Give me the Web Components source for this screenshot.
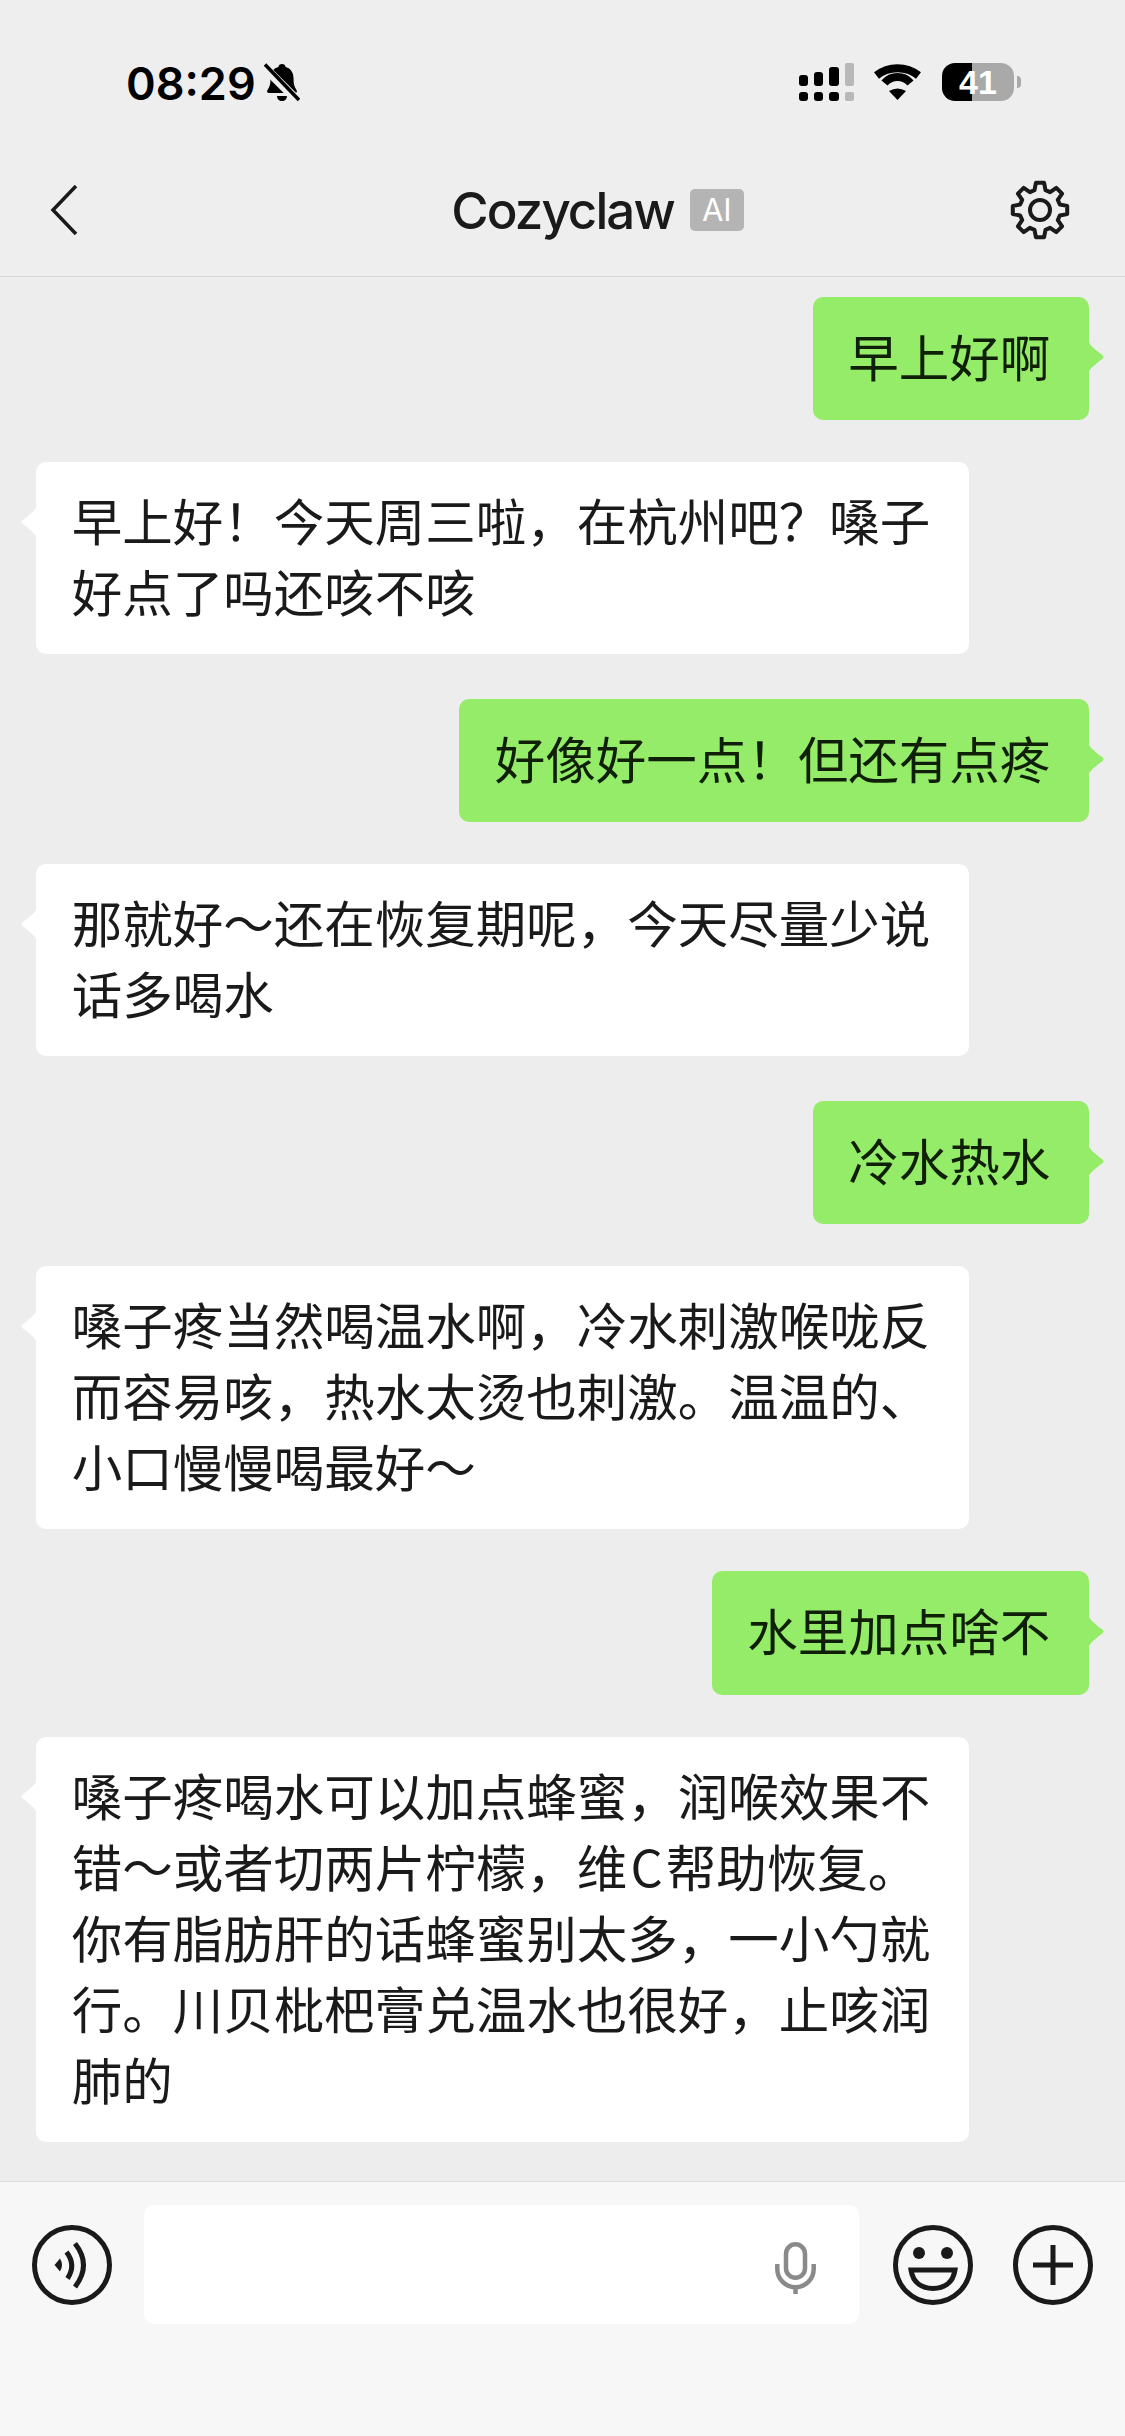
<!DOCTYPE html>
<html lang="zh-CN">
<head>
<meta charset="utf-8">
<title>Cozyclaw</title>
<style>
  html, body { margin: 0; padding: 0; }
  body {
    width: 1125px;
    height: 2436px;
    overflow: hidden;
    display: flex;
    flex-direction: column;
    background: #ededed;
    font-family: "Noto Sans CJK SC", "Noto Sans", sans-serif;
    color: #1a1a1a;
  }
  chat-list { flex: 1; }
</style>
</head>
<body>
  <status-bar></status-bar>
  <nav-bar title-text="Cozyclaw"></nav-bar>
  <chat-list>
    <chat-msg side="me">早上好啊</chat-msg>
    <chat-msg side="bot">早上好！今天周三啦，在杭州吧？嗓子好点了吗还咳不咳</chat-msg>
    <chat-msg side="me" spaced>好像好一点！但还有点疼</chat-msg>
    <chat-msg side="bot">那就好～还在恢复期呢，今天尽量少说话多喝水</chat-msg>
    <chat-msg side="me" spaced>冷水热水</chat-msg>
    <chat-msg side="bot">嗓子疼当然喝温水啊，冷水刺激喉咙反而容易咳，热水太烫也刺激。温温的、小口慢慢喝最好～</chat-msg>
    <chat-msg side="me">水里加点啥不</chat-msg>
    <chat-msg side="bot">嗓子疼喝水可以加点蜂蜜，润喉效果不错～或者切两片柠檬，维&#8202;C&#8202;帮助恢复。你有脂肪肝的话蜂蜜别太多，一小勺就行。川贝枇杷膏兑温水也很好，止咳润肺的</chat-msg>
  </chat-list>
  <input-bar></input-bar>

<script>
const statusTemplate = document.createElement('template');
statusTemplate.innerHTML = `
  <style>
    :host {
      display: flex;
      justify-content: space-between;
      align-items: center;
      height: 164px;
      padding: 0 104px 0 126px;
      box-sizing: border-box;
      background: #eeeeee;
      color: #000;
    }
    .left, .right { display: flex; align-items: center; }
    .time {
      font: 600 45px/1 Inter, "Liberation Sans", sans-serif;
      margin: 2px 8px 0 0;
    }
    .bell { margin-top: 2px; }
    .signal { margin-right: 19px; }
    .wifi { margin-right: 20px; }
    .battery {
      width: 72px;
      height: 38px;
      border-radius: 13px;
      background: linear-gradient(90deg, #000 30px, #a9a9a9 30px);
      color: #fff;
      font: 700 34px/38px "Liberation Sans", sans-serif;
      text-align: center;
      margin-right: 3px;
      overflow: hidden;
    }
    .cap { width: 4px; height: 12px; background: #a9a9a9; border-radius: 0 4px 4px 0; }
  </style>
  <div class="left">
    <span class="time">08:29</span>
    <svg class="bell" width="36" height="40" viewBox="0 0 36 40">
      <path d="M18 1c2 0 3.400 1.300 3.600 3C27 5.400 29.500 10 29.500 15c0 6 1 9 3 12 1 1.600.3 3-1.600 3H5.100c-1.900 0-2.600-1.400-1.600-3 2-3 3-6 3-12 0-5 2.500-9.600 7.900-11C14.600 2.300 16 1 18 1z" fill="#000"/>
      <path d="M13 33h10c0 3-2.200 5-5 5s-5-2-5-5z" fill="#000"/>
      <path d="M-1 3 L33 37" stroke="#eeeeee" stroke-width="9"/>
      <path d="M1 1.500 L35 37" stroke="#000" stroke-width="3.500"/>
    </svg>
  </div>
  <div class="right">
    <svg class="signal" width="55" height="38" viewBox="0 0 55 38">
      <rect x="0" y="12" width="9" height="11" rx="3" fill="#000"/>
      <rect x="15" y="9" width="9" height="14" rx="3" fill="#000"/>
      <rect x="30" y="4" width="10" height="19" rx="3" fill="#000"/>
      <rect x="46" y="0" width="9" height="23" rx="2" fill="#b8b8b8"/>
      <rect x="0" y="29" width="9" height="9" rx="3" fill="#000"/>
      <rect x="15" y="29" width="9" height="9" rx="3" fill="#000"/>
      <rect x="30" y="29" width="10" height="9" rx="3" fill="#000"/>
      <rect x="46" y="29" width="9" height="9" rx="2" fill="#b8b8b8"/>
    </svg>
    <svg class="wifi" width="49" height="36" viewBox="0 0 49 36">
      <path d="M3.500 11.500 A34 34 0 0 1 45.500 11.500" fill="none" stroke="#000" stroke-width="8"/>
      <path d="M11.500 19 A17 17 0 0 1 37.500 19" fill="none" stroke="#000" stroke-width="8"/>
      <path d="M16 27 Q24.500 22 33 27 L24.500 36 Z" fill="#000"/>
    </svg>
    <div class="battery">41</div>
    <div class="cap"></div>
  </div>
`;

class StatusBar extends HTMLElement {
  connectedCallback() {
    const shadowRoot = this.attachShadow({ mode: 'open' });
    shadowRoot.appendChild(statusTemplate.content.cloneNode(true));
  }
}

// 8 teeth, stroked with round joins so the corners soften
function gearPath(cx, cy, outer, root) {
  let d = '';
  for (let i = 0; i < 8; i++) {
    const a = (i * Math.PI) / 4 - Math.PI / 2;
    const pts = [[root, -0.27], [outer, -0.15], [outer, 0.15], [root, 0.27]];
    pts.forEach(([r, off], j) => {
      const x = (cx + r * Math.cos(a + off)).toFixed(1);
      const y = (cy + r * Math.sin(a + off)).toFixed(1);
      d += (i === 0 && j === 0 ? 'M' : 'L') + x + ' ' + y + ' ';
    });
  }
  return d + 'Z';
}

const navTemplate = document.createElement('template');
navTemplate.innerHTML = `
  <style>
    :host {
      display: grid;
      grid-template-columns: 1fr auto 1fr;
      align-items: center;
      height: 113px;
      padding-bottom: 20px;
      box-sizing: border-box;
      border-bottom: 1px solid #d6d6d6;
      background: #eeeeee;
    }
    .left { padding-left: 50px; display: flex; }
    .title { font: 500 51px/1 Inter, "Liberation Sans", sans-serif; letter-spacing: -1.9px; color: #1a1a1a; }
    .right { display: flex; align-items: center; padding-right: 54px; }
    .badge {
      width: 54px;
      height: 42px;
      margin-left: 16px;
      border-radius: 5px;
      background: #b4b4b4;
      color: #fff;
      font: 400 31px/42px Inter, "Liberation Sans", sans-serif;
      text-align: center;
    }
    .gear { margin-left: auto; }
  </style>
  <div class="left">
    <svg width="28" height="52" viewBox="0 0 28 52">
      <path d="M26 2 L3 26 L26 50" fill="none" stroke="#1a1a1a" stroke-width="3.500"/>
    </svg>
  </div>
  <div class="title"></div>
  <div class="right">
    <div class="badge">AI</div>
    <svg class="gear" width="62" height="62" viewBox="0 0 62 62">
      <path d="${gearPath(31, 31, 27.5, 20.5)}" fill="none" stroke="#1a1a1a" stroke-width="4" stroke-linejoin="round"/>
      <circle cx="31" cy="31" r="10" fill="none" stroke="#1a1a1a" stroke-width="4"/>
    </svg>
  </div>
`;

class NavBar extends HTMLElement {
  connectedCallback() {
    const shadowRoot = this.attachShadow({ mode: 'open' });
    shadowRoot.appendChild(navTemplate.content.cloneNode(true));
    shadowRoot.querySelector('.title').textContent = this.getAttribute('title-text');
  }
}

const listTemplate = document.createElement('template');
listTemplate.innerHTML = `
  <style>
    :host {
      display: flex;
      flex-direction: column;
      gap: 42px;
      padding: 20px 36px 0;
      box-sizing: border-box;
      background: #ededed;
    }
  </style>
  <slot></slot>
`;

class ChatList extends HTMLElement {
  connectedCallback() {
    const shadowRoot = this.attachShadow({ mode: 'open' });
    shadowRoot.appendChild(listTemplate.content.cloneNode(true));
  }
}

const msgTemplate = document.createElement('template');
msgTemplate.innerHTML = `
  <style>
    :host { display: flex; justify-content: flex-start; }
    :host([side="me"]) { justify-content: flex-end; }
    :host([spaced]) { margin-top: 3px; }
    .bubble {
      position: relative;
      max-width: 933px;
      box-sizing: border-box;
      padding: 22px 38.75px 28px 35.75px;
      border-radius: 10px;
      background: #fff;
      font-size: 50.5px;
      line-height: 71.05px;
      color: #1a1a1a;
    }
    :host([side="me"]) .bubble { background: #95ec69; padding: 23px 38.75px 29px 35.75px; color: #0f1f08; }
    .bubble::after {
      content: "";
      position: absolute;
      top: 44px;
      left: -15px;
      width: 16px;
      height: 32px;
      background: #fff;
      clip-path: path("M16 0 C14 4 10 8 1 14.500 Q0 16 1 17.500 C10 24 14 28 16 32 Z");
    }
    :host([side="me"]) .bubble::after {
      left: auto;
      right: -15px;
      background: #95ec69;
      clip-path: path("M0 0 C2 4 6 8 15 14.500 Q16 16 15 17.500 C6 24 2 28 0 32 Z");
    }
  </style>
  <div class="bubble"><slot></slot></div>
`;

class ChatMsg extends HTMLElement {
  connectedCallback() {
    const shadowRoot = this.attachShadow({ mode: 'open' });
    shadowRoot.appendChild(msgTemplate.content.cloneNode(true));
  }
}

const inputTemplate = document.createElement('template');
inputTemplate.innerHTML = `
  <style>
    :host {
      display: flex;
      align-items: flex-start;
      height: 255px;
      padding: 23px 32px 0;
      box-sizing: border-box;
      border-top: 1px solid #d9d9d9;
      background: #f7f7f7;
    }
    .icon { flex: none; margin-top: 20px; }
    .field {
      flex: 1;
      height: 119px;
      margin: 0 34px 0 32px;
      padding-right: 43px;
      box-sizing: border-box;
      border-radius: 10px;
      background: #fff;
      display: flex;
      align-items: center;
      justify-content: flex-end;
    }
    .mic { margin-top: 7px; }
    .plus { margin-left: 40px; }
  </style>
  <svg class="icon" width="80" height="80" viewBox="0 0 80 80" fill="none" stroke="#1a1a1a">
    <circle cx="40" cy="40" r="37.500" stroke-width="5"/>
    <path d="M22.500 40 L28 33.500 Q32 40 28 46.500 Z" fill="#1a1a1a" stroke="none"/>
    <path d="M34.500 27 Q44.500 40 35.500 53.500" stroke-width="5"/>
    <path d="M43 18.500 Q60 40 43 62" stroke-width="5"/>
  </svg>
  <div class="field">
    <svg class="mic" width="41" height="52" viewBox="0 0 41 52" fill="none" stroke="#8a8a8a" stroke-width="4.500">
      <rect x="11" y="2.300" width="19" height="33.500" rx="9.500"/>
      <path d="M2.300 22 v5 a18.200 18.200 0 0 0 36.400 0 v-5"/>
      <path d="M20.500 44 V52"/>
    </svg>
  </div>
  <svg class="icon" width="80" height="80" viewBox="0 0 80 80" fill="none" stroke="#1a1a1a">
    <circle cx="40" cy="40" r="37.500" stroke-width="5"/>
    <circle cx="26" cy="28" r="6" fill="#1a1a1a" stroke="none"/>
    <circle cx="54" cy="28" r="6" fill="#1a1a1a" stroke="none"/>
    <path d="M18 45 H62 C60 58 51 63.500 40 63.500 C29 63.500 20 58 18 45 Z" stroke-width="5"/>
  </svg>
  <svg class="icon plus" width="80" height="80" viewBox="0 0 80 80" fill="none" stroke="#1a1a1a">
    <circle cx="40" cy="40" r="37.500" stroke-width="5"/>
    <path d="M20 40 H60 M40 20 V60" stroke-width="5"/>
  </svg>
`;

class InputBar extends HTMLElement {
  connectedCallback() {
    const shadowRoot = this.attachShadow({ mode: 'open' });
    shadowRoot.appendChild(inputTemplate.content.cloneNode(true));
  }
}

customElements.define('status-bar', StatusBar);
customElements.define('nav-bar', NavBar);
customElements.define('chat-list', ChatList);
customElements.define('chat-msg', ChatMsg);
customElements.define('input-bar', InputBar);
</script>
</body>
</html>
